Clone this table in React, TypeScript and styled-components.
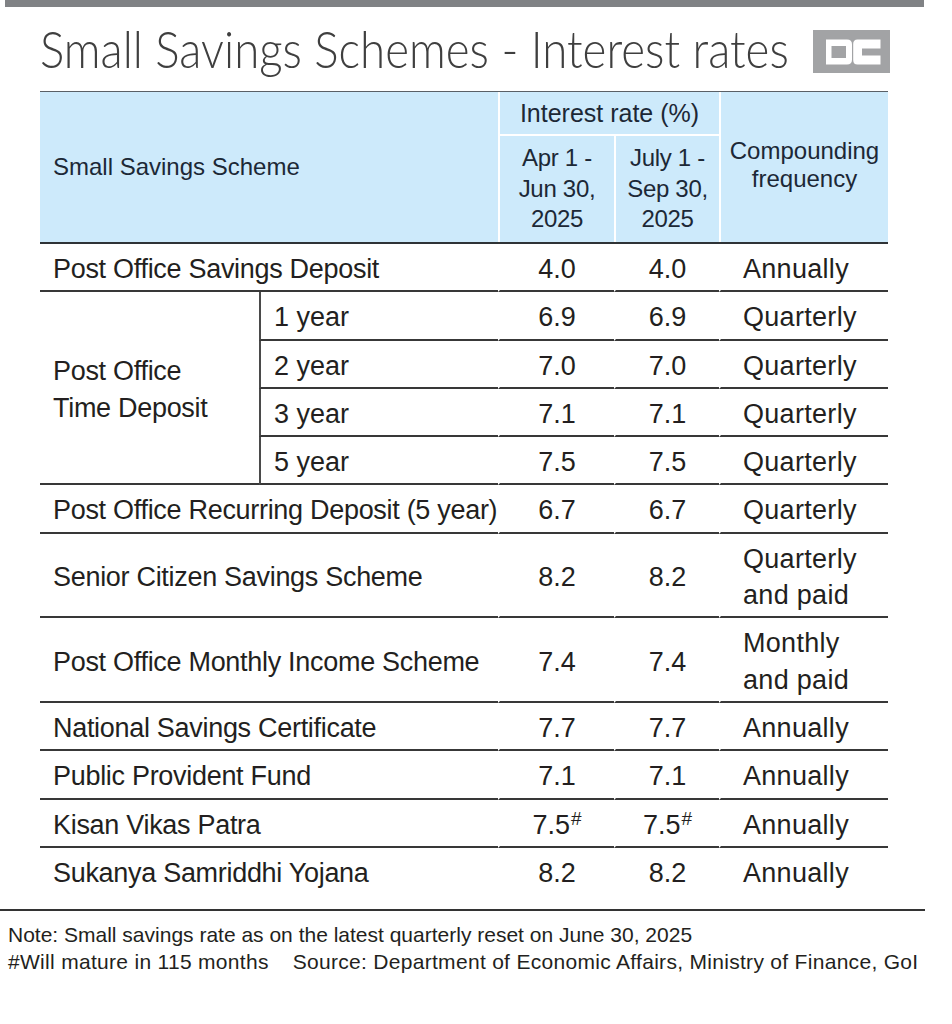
import React from 'react';
import styled, { createGlobalStyle } from 'styled-components';

const GlobalStyle = createGlobalStyle`
  html, body { margin: 0; padding: 0; background: #ffffff; }
  body { font-family: "Liberation Sans", Arial, sans-serif; color: #231f20; }
`;

const Page = styled.div`
  width: 952px;
  padding-bottom: 40px;
`;

const TopBar = styled.div`
  margin-left: 5px;
  width: 919px;
  height: 7px;
  background: #808285;
`;

const TitleRow = styled.div`
  display: flex;
  align-items: flex-start;
  height: 84px;
  box-sizing: border-box;
  padding: 11px 62px 0 40px;
`;

const TitleBox = styled.div`
  flex: 1 1 auto;
  min-width: 0;
  white-space: nowrap;
`;

const Title = styled.h1`
  margin: 0;
  display: inline-block;
  font-family: Lato, Roboto, "Liberation Sans", sans-serif;
  font-weight: 300;
  font-size: 52px;
  line-height: 60px;
  color: #3f3f3f;
  transform: scaleX(0.878);
  transform-origin: left center;
`;

const LogoSvg = styled.svg`
  flex: none;
  display: block;
  margin-top: 12px;
`;

const Grid = styled.div`
  display: grid;
  grid-template-columns: 219px 239px 116px 105px 169px;
  margin-left: 40px;
  width: 848px;
`;

const TopRule = styled.div`
  grid-column: 1 / -1;
  height: 1px;
  background: #5a6066;
`;

const HeadRule = styled.div`
  grid-column: 1 / -1;
  height: 2px;
  background: #2f3336;
`;

const HeadCell = styled.div`
  background: #cdeafb;
  color: #1c2836;
  font-size: 24px;
  display: flex;
  align-items: center;
`;

const HeadName = styled(HeadCell)`
  grid-column: span 2;
  grid-row: span 2;
  padding-left: 13px;
`;

const HeadGroup = styled(HeadCell)`
  grid-column: span 2;
  height: 42px;
  justify-content: center;
  font-size: 25px;
  border-left: 2px solid #ffffff;
  border-bottom: 2px solid #ffffff;
`;

const HeadComp = styled(HeadCell)`
  grid-row: span 2;
  justify-content: center;
  text-align: center;
  line-height: 28px;
  border-left: 2px solid #ffffff;
  padding-bottom: 4px;
`;

const HeadPeriod = styled(HeadCell)`
  justify-content: center;
  text-align: center;
  line-height: 30.5px;
  padding: 7px 0 7.5px;
  border-left: 2px solid #ffffff;
  letter-spacing: -0.3px;
`;

const BodyCell = styled.div<{ $last?: boolean }>`
  display: flex;
  align-items: center;
  padding: 7px 0 3px;
  font-size: 27px;
  line-height: 36.3px;
  border-bottom: ${(p) => (p.$last ? '2px solid transparent' : '2px solid #383838')};
`;

const NameCell = styled(BodyCell)`
  grid-column: span 2;
  padding-left: 13px;
  white-space: nowrap;
  letter-spacing: -0.3px;
`;

const GroupCell = styled(BodyCell)`
  grid-row: span 4;
  padding-left: 13px;
  line-height: 37px;
  letter-spacing: -0.3px;
`;

const SubCell = styled(BodyCell)`
  border-left: 2px solid #4a4a4a;
  padding-left: 13px;
`;

const RateCell = styled(BodyCell)`
  justify-content: center;
  border-left: 2px solid #ffffff;
`;

const FreqCell = styled(BodyCell)`
  border-left: 2px solid #ffffff;
  padding-left: 22px;
  letter-spacing: 0.3px;
`;

const Sup = styled.span`
  font-size: 19px;
  line-height: 1;
  align-self: flex-start;
  margin-top: 2px;
  margin-left: 1px;
`;

const FootRule = styled.div`
  margin-top: 13px;
  width: 925px;
  height: 2px;
  background: #333333;
`;

const Notes = styled.div`
  padding: 10px 0 0 8px;
  font-size: 21px;
  line-height: 27px;
  color: #231f20;
`;

const NoteLine = styled.div<{ $spread?: boolean }>`
  display: flex;
  gap: 24px;
  white-space: nowrap;
  letter-spacing: ${(p) => (p.$spread ? '0.3px' : '0')};
`;

type Row = {
  name: string;
  a: string;
  b: string;
  freq: React.ReactNode;
  sup?: boolean;
};

const topRows: Row[] = [{ name: 'Post Office Savings Deposit', a: '4.0', b: '4.0', freq: 'Annually' }];

const timeRows = [
  { sub: '1 year', a: '6.9', b: '6.9', freq: 'Quarterly' },
  { sub: '2 year', a: '7.0', b: '7.0', freq: 'Quarterly' },
  { sub: '3 year', a: '7.1', b: '7.1', freq: 'Quarterly' },
  { sub: '5 year', a: '7.5', b: '7.5', freq: 'Quarterly' },
];

const restRows: Row[] = [
  { name: 'Post Office Recurring Deposit (5 year)', a: '6.7', b: '6.7', freq: 'Quarterly' },
  {
    name: 'Senior Citizen Savings Scheme',
    a: '8.2',
    b: '8.2',
    freq: (
      <>
        Quarterly
        <br />
        and paid
      </>
    ),
  },
  {
    name: 'Post Office Monthly Income Scheme',
    a: '7.4',
    b: '7.4',
    freq: (
      <>
        Monthly
        <br />
        and paid
      </>
    ),
  },
  { name: 'National Savings Certificate', a: '7.7', b: '7.7', freq: 'Annually' },
  { name: 'Public Provident Fund', a: '7.1', b: '7.1', freq: 'Annually' },
  { name: 'Kisan Vikas Patra', a: '7.5', b: '7.5', freq: 'Annually', sup: true },
  { name: 'Sukanya Samriddhi Yojana', a: '8.2', b: '8.2', freq: 'Annually' },
];

const Logo = () => (
  <LogoSvg width="77" height="43" viewBox="0 0 77 43">
    <rect x="0" y="0" width="77" height="43" fill="#a2a3a5" />
    <path d="M13 9.5 H34 Q39 9.5 39 14.5 V29.5 Q39 34.5 34 34.5 H13 Z" fill="#ffffff" />
    <rect x="18.5" y="16" width="14.5" height="12" fill="#a2a3a5" />
    <path d="M44.5 9.5 H67.5 V18.5 H49 V25.5 H67.5 V34.5 H44.5 Q40.2 34.5 40.2 30 V14 Q40.2 9.5 44.5 9.5 Z" fill="#ffffff" />
  </LogoSvg>
);

const Rates = ({ r, last }: { r: { a: string; b: string; freq: React.ReactNode; sup?: boolean }; last?: boolean }) => (
  <>
    <RateCell $last={last}>
      {r.a}
      {r.sup && <Sup>#</Sup>}
    </RateCell>
    <RateCell $last={last}>
      {r.b}
      {r.sup && <Sup>#</Sup>}
    </RateCell>
    <FreqCell $last={last}>
      <span>{r.freq}</span>
    </FreqCell>
  </>
);

export default function App() {
  return (
    <Page>
      <GlobalStyle />
      <TopBar />
      <TitleRow>
        <TitleBox>
          <Title>Small Savings Schemes - Interest rates</Title>
        </TitleBox>
        <Logo />
      </TitleRow>
      <Grid>
        <TopRule />
        <HeadName>Small Savings Scheme</HeadName>
        <HeadGroup>Interest rate (%)</HeadGroup>
        <HeadComp>
          <span>
            Compounding
            <br />
            frequency
          </span>
        </HeadComp>
        <HeadPeriod>
          <span>
            Apr 1 -
            <br />
            Jun 30,
            <br />
            2025
          </span>
        </HeadPeriod>
        <HeadPeriod>
          <span>
            July 1 -
            <br />
            Sep 30,
            <br />
            2025
          </span>
        </HeadPeriod>
        <HeadRule />

        {topRows.map((r) => (
          <React.Fragment key={r.name}>
            <NameCell>{r.name}</NameCell>
            <Rates r={r} />
          </React.Fragment>
        ))}

        <GroupCell>
          <span>
            Post Office
            <br />
            Time Deposit
          </span>
        </GroupCell>
        {timeRows.map((r) => (
          <React.Fragment key={r.sub}>
            <SubCell>{r.sub}</SubCell>
            <Rates r={r} />
          </React.Fragment>
        ))}

        {restRows.map((r, i) => {
          const last = i === restRows.length - 1;
          return (
            <React.Fragment key={r.name}>
              <NameCell $last={last}>{r.name}</NameCell>
              <Rates r={r} last={last} />
            </React.Fragment>
          );
        })}
      </Grid>
      <FootRule />
      <Notes>
        <NoteLine>Note: Small savings rate as on the latest quarterly reset on June 30, 2025</NoteLine>
        <NoteLine $spread>
          <span>#Will mature in 115 months</span>
          <span>Source: Department of Economic Affairs, Ministry of Finance, GoI</span>
        </NoteLine>
      </Notes>
    </Page>
  );
}
